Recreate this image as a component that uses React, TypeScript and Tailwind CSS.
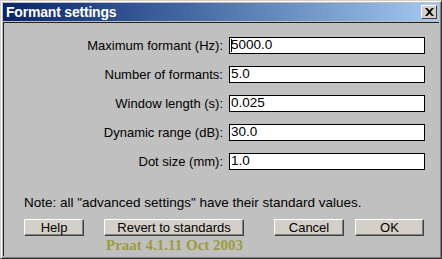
const fields = [
  { label: "Maximum formant (Hz):", value: "5000.0", caret: true },
  { label: "Number of formants:", value: "5.0" },
  { label: "Window length (s):", value: "0.025" },
  { label: "Dynamic range (dB):", value: "30.0" },
  { label: "Dot size (mm):", value: "1.0" },
];

function Btn({ label, w, className = "" }: { label: string; w: string; className?: string }) {
  return (
    <div
      className={`${w} h-[17px] bg-[#d4d0c8] border border-t-white border-l-white border-r-[#404040] border-b-[#404040] shadow-[inset_-1px_-1px_0_#808080] flex items-center justify-center text-[13px] leading-none text-black ${className}`}
    >
      {label}
    </div>
  );
}

export default function App() {
  return (
    <div
      className="w-[442px] h-[259px] bg-[#c0c0c0] border border-t-[#d4d0c8] border-l-[#d4d0c8] border-r-[#303030] border-b-[#303030] shadow-[inset_1px_1px_0_#ffffff,inset_-1px_-1px_0_#808080] p-[2px] flex flex-col"
      style={{ fontFamily: '"Liberation Sans", Arial, sans-serif' }}
    >
      {/* title bar */}
      <div className="h-[18px] bg-gradient-to-r from-[#0a246a] to-[#a6caf0] flex items-center pl-[3px] pr-[2px]">
        <span className="text-white font-bold text-[14px] tracking-[-0.2px] leading-none flex-1">Formant settings</span>
        <div className="w-[16px] h-[14px] bg-[#d4d0c8] border border-t-white border-l-white border-r-[#404040] border-b-[#404040] flex items-center justify-center">
          <svg width="9" height="8" viewBox="0 0 9 8">
            <path d="M0 0h2.2l2.3 2.6L6.8 0H9L5.6 4 9 8H6.8L4.5 5.4 2.2 8H0l3.4-4z" fill="#000" />
          </svg>
        </div>
      </div>

      {/* content */}
      <div className="mt-[1px] flex-1 border-t border-l border-[#202020] flex flex-col relative">
        <div className="grid grid-cols-[1fr_196px] gap-x-[6px] gap-y-[12px] pt-[14px] pr-[14px]">
          {fields.map((f) => (
            <div key={f.label} className="contents">
              <div className="h-[17px] flex items-center justify-end text-[13px] text-black">{f.label}</div>
              <div className="h-[17px] bg-white border border-black flex items-center pl-[1px] text-[13.5px] text-black relative">
                {f.caret && <span className="absolute left-[1px] top-[1px] w-[1px] h-[13px] bg-black" />}
                {f.value}
              </div>
            </div>
          ))}
        </div>

        <div className="mt-[25px] pl-[20px] text-[13.5px] leading-[16px] text-black">
          Note: all "advanced settings" have their standard values.
        </div>

        <div className="mt-[8px] pl-[20px] flex">
          <Btn label="Help" w="w-[60px]" />
          <Btn label="Revert to standards" w="w-[140px]" className="ml-[20px]" />
          <Btn label="Cancel" w="w-[70px]" className="ml-[30px]" />
          <Btn label="OK" w="w-[69px]" className="ml-[11px]" />
        </div>

        <div
          className="pl-[102px] mt-[1px] text-[15px] font-bold leading-[16px] text-[#9c9c3c]"
          style={{ fontFamily: '"Liberation Serif", "Times New Roman", serif' }}
        >
          Praat 4.1.11 Oct 2003
        </div>
      </div>
    </div>
  );
}
